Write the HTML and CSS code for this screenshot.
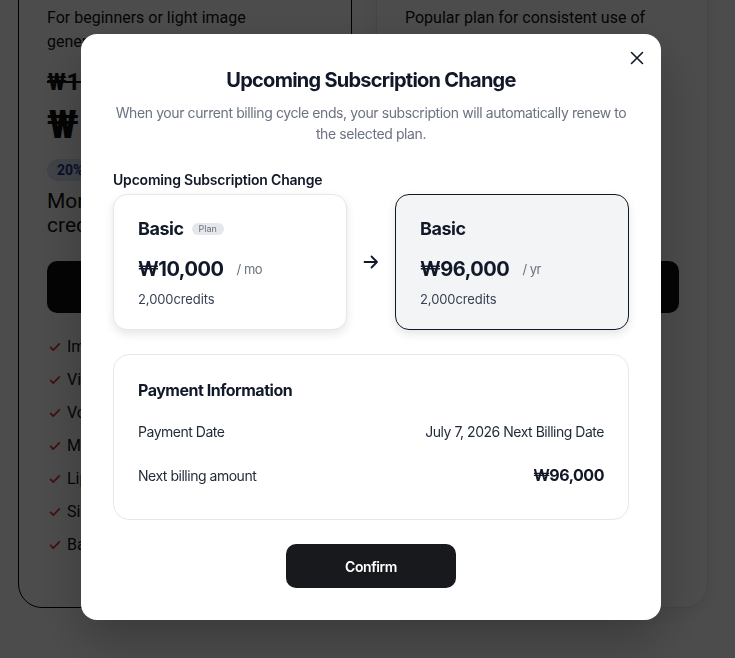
FILE: index.html
```html
<!DOCTYPE html>
<html lang="en">
<head>
<meta charset="utf-8">
<title>Upcoming Subscription Change</title>
<link rel="stylesheet" href="styles.css">
</head>
<body>
<main class="pricing">
  <section class="plan plan-basic">
    <h2 class="plan-name">Basic</h2>
    <p class="plan-desc">For beginners or light image generation</p>
    <p class="plan-old">₩12,500</p>
    <p class="plan-price">₩10,000</p>
    <span class="plan-badge">20% OFF</span>
    <p class="plan-credits">More image generation credits</p>
    <button class="plan-btn">Current plan</button>
    <ul class="features">
      <li><svg viewBox="0 0 16 16"><path d="M3 8.5l3 3 7-7"/></svg>Image generation</li>
      <li><svg viewBox="0 0 16 16"><path d="M3 8.5l3 3 7-7"/></svg>Video generation</li>
      <li><svg viewBox="0 0 16 16"><path d="M3 8.5l3 3 7-7"/></svg>Voice generation</li>
      <li><svg viewBox="0 0 16 16"><path d="M3 8.5l3 3 7-7"/></svg>Music generation</li>
      <li><svg viewBox="0 0 16 16"><path d="M3 8.5l3 3 7-7"/></svg>Lip sync</li>
      <li><svg viewBox="0 0 16 16"><path d="M3 8.5l3 3 7-7"/></svg>Similar image search</li>
      <li><svg viewBox="0 0 16 16"><path d="M3 8.5l3 3 7-7"/></svg>Basic support</li>
    </ul>
  </section>
  <section class="plan plan-pro">
    <h2 class="plan-name">Pro</h2>
    <p class="plan-desc">Popular plan for consistent use of AI tools</p>
    <p class="plan-old">₩37,500</p>
    <p class="plan-price">₩30,000</p>
    <span class="plan-badge">20% OFF</span>
    <p class="plan-credits">More image generation credits</p>
    <button class="plan-btn">Upgrade</button>
    <ul class="features">
      <li><svg viewBox="0 0 16 16"><path d="M3 8.5l3 3 7-7"/></svg>Image generation</li>
      <li><svg viewBox="0 0 16 16"><path d="M3 8.5l3 3 7-7"/></svg>Video generation</li>
      <li><svg viewBox="0 0 16 16"><path d="M3 8.5l3 3 7-7"/></svg>Voice generation</li>
      <li><svg viewBox="0 0 16 16"><path d="M3 8.5l3 3 7-7"/></svg>Music generation</li>
      <li><svg viewBox="0 0 16 16"><path d="M3 8.5l3 3 7-7"/></svg>Lip sync</li>
      <li><svg viewBox="0 0 16 16"><path d="M3 8.5l3 3 7-7"/></svg>Similar image search</li>
      <li><svg viewBox="0 0 16 16"><path d="M3 8.5l3 3 7-7"/></svg>Priority support</li>
    </ul>
  </section>
</main>

<div class="overlay">
  <div class="modal" role="dialog" aria-labelledby="modal-title">
    <button class="close" aria-label="Close">
      <svg viewBox="0 0 16 16"><path d="M2.5 2.5l11 11M13.5 2.5l-11 11"/></svg>
    </button>
    <h1 id="modal-title" class="modal-title">Upcoming Subscription Change</h1>
    <p class="modal-sub">When your current billing cycle ends, your subscription will automatically renew to the selected plan.</p>

    <h3 class="section-label">Upcoming Subscription Change</h3>
    <div class="change-row">
      <div class="sub-card">
        <div class="sub-name">Basic <span class="pill">Plan</span></div>
        <div class="sub-price"><strong>₩10,000</strong><span class="per">/ mo</span></div>
        <div class="sub-credits">2,000credits</div>
      </div>
      <div class="arrow">
        <svg viewBox="0 0 20 20"><path d="M3.5 10h12.5M10.5 4.5L16 10l-5.5 5.5"/></svg>
      </div>
      <div class="sub-card selected">
        <div class="sub-name">Basic</div>
        <div class="sub-price"><strong>₩96,000</strong><span class="per">/ yr</span></div>
        <div class="sub-credits">2,000credits</div>
      </div>
    </div>

    <div class="pay-card">
      <h4 class="pay-title">Payment Information</h4>
      <div class="pay-row">
        <span>Payment Date</span>
        <span>July 7, 2026 Next Billing Date</span>
      </div>
      <div class="pay-row">
        <span>Next billing amount</span>
        <strong class="pay-amount">₩96,000</strong>
      </div>
    </div>

    <div class="actions">
      <button class="confirm">Confirm</button>
    </div>
  </div>
</div>
</body>
</html>
```

FILE: styles.css
```css
* { box-sizing: border-box; }

html, body {
  margin: 0;
  padding: 0;
  height: 100%;
  overflow: hidden;
}

body {
  background: #ffffff;
  font-family: Roboto, "Liberation Sans", sans-serif;
  color: #111111;
}

/* ---------- background pricing page ---------- */
.pricing {
  display: flex;
  gap: 24px;
  padding-left: 18px;
  margin-top: -63px;
  align-items: flex-start;
}

.plan {
  display: flex;
  flex-direction: column;
  align-items: flex-start;
  border-radius: 24px;
  padding: 28px 28px 50px;
  background: #ffffff;
}

.plan-basic {
  width: 334px;
  border: 1px solid #000000;
}

.plan-pro {
  width: 332px;
  border: 1px solid #e5e7eb;
  box-shadow: 0 6px 20px rgba(0, 0, 0, 0.08);
}

.plan-name {
  margin: 0 0 8px;
  font-size: 24px;
  line-height: 32px;
  font-weight: 700;
}

.plan-desc {
  margin: 0;
  font-size: 16px;
  line-height: 24px;
  width: 250px;
}

.plan-old {
  margin: 14px 0 0;
  font-size: 24px;
  line-height: 28px;
  font-weight: 700;
  text-decoration: line-through;
}

.plan-price {
  margin: 7px 0 0;
  font-size: 38px;
  line-height: 44px;
  font-weight: 800;
}

.plan-badge {
  margin-top: 12px;
  height: 22px;
  line-height: 22px;
  padding: 0 10px;
  border-radius: 999px;
  background: #dbe4f8;
  color: #1e3a8a;
  font-size: 14px;
  font-weight: 700;
}

.plan-credits {
  margin: 8px 0 0;
  font-size: 21px;
  line-height: 24px;
  width: 250px;
}

.plan-btn {
  margin-top: 24px;
  width: 100%;
  height: 52px;
  border: 0;
  border-radius: 10px;
  background: #0f1012;
  color: #ffffff;
  font: 600 16px Roboto, sans-serif;
}

.features {
  list-style: none;
  margin: 22px 0 0;
  padding: 0 0 0 1px;
  display: flex;
  flex-direction: column;
  gap: 9px;
}

.features li {
  display: flex;
  align-items: center;
  gap: 5px;
  font-size: 16px;
  line-height: 24px;
}

.features svg {
  width: 14px;
  height: 14px;
  fill: none;
  stroke: #e03131;
  stroke-width: 2;
  stroke-linecap: round;
  stroke-linejoin: round;
}

/* ---------- overlay + modal ---------- */
.overlay {
  position: fixed;
  inset: 0;
  background: rgba(0, 0, 0, 0.7);
  display: flex;
  align-items: center;
  justify-content: center;
  padding: 0 0 4px 7px;
}

.modal {
  position: relative;
  width: 580px;
  background: #ffffff;
  border-radius: 16px;
  padding: 32px 32px 32px;
  font-family: Inter, "Noto Sans", sans-serif;
  color: #111827;
  letter-spacing: -0.03em;
  box-shadow: 0 20px 50px rgba(0, 0, 0, 0.25);
}

.close {
  position: absolute;
  top: 15px;
  right: 15px;
  width: 18px;
  height: 18px;
  padding: 0;
  border: 0;
  background: transparent;
  display: flex;
  align-items: center;
  justify-content: center;
}

.close svg {
  width: 16px;
  height: 16px;
  fill: none;
  stroke: #111827;
  stroke-width: 1.6;
  stroke-linecap: round;
}

.modal-title {
  margin: 0;
  text-align: center;
  font-size: 20px;
  line-height: 28px;
  font-weight: 700;
  letter-spacing: -0.75px;
}

.modal-sub {
  margin: 8px 0 0;
  text-align: center;
  font-size: 14px;
  line-height: 21px;
  color: #6b7280;
  letter-spacing: -0.4px;
}

.section-label {
  margin: 26px 0 4px;
  font-size: 14px;
  line-height: 20px;
  font-weight: 600;
  letter-spacing: -0.2px;
}

.change-row {
  display: flex;
  align-items: center;
}

.sub-card {
  width: 234px;
  height: 136px;
  border: 1px solid #e5e7eb;
  border-radius: 14px;
  padding: 22px 24px 21px;
  background: #ffffff;
  box-shadow: 0 4px 10px rgba(0, 0, 0, 0.1);
}

.sub-card.selected {
  background: #f3f4f6;
  border-color: #111827;
}

.arrow {
  flex: 1;
  display: flex;
  justify-content: center;
}

.arrow svg {
  width: 20px;
  height: 20px;
  fill: none;
  stroke: #111827;
  stroke-width: 1.8;
  stroke-linecap: round;
  stroke-linejoin: round;
}

.sub-name {
  display: flex;
  align-items: center;
  gap: 8px;
  font-size: 18px;
  line-height: 24px;
  font-weight: 700;
}

.pill {
  font-size: 9px;
  line-height: 12px;
  font-weight: 400;
  color: #6b7280;
  background: #e5e7eb;
  padding: 0 7px;
  border-radius: 999px;
  letter-spacing: 0;
}

.sub-price {
  margin-top: 14px;
  display: flex;
  align-items: center;
  gap: 13px;
  line-height: 28px;
}

.sub-price strong {
  font-size: 20px;
  font-weight: 700;
}

.per {
  font-size: 13px;
  color: #6b7280;
}

.sub-credits {
  margin-top: 7px;
  font-size: 13px;
  line-height: 18px;
  color: #374151;
  letter-spacing: -0.1px;
}

.pay-card {
  margin-top: 24px;
  border: 1px solid #e5e7eb;
  border-radius: 16px;
  padding: 23px 24px 32px;
}

.pay-title {
  margin: 0;
  font-size: 16px;
  line-height: 24px;
  font-weight: 700;
}

.pay-row {
  display: flex;
  justify-content: space-between;
  align-items: center;
  min-height: 24px;
  font-size: 14px;
  color: #1f2937;
}

.pay-title + .pay-row { margin-top: 17px; }
.pay-row + .pay-row { margin-top: 20px; }

.pay-amount {
  font-size: 16px;
  font-weight: 700;
  color: #111827;
}

.actions {
  margin-top: 24px;
  display: flex;
  justify-content: center;
}

.confirm {
  width: 170px;
  height: 44px;
  border: 0;
  border-radius: 10px;
  background: #18191d;
  color: #ffffff;
  font: 600 14px Inter, "Noto Sans", sans-serif;
  letter-spacing: -0.03em;
}
```
